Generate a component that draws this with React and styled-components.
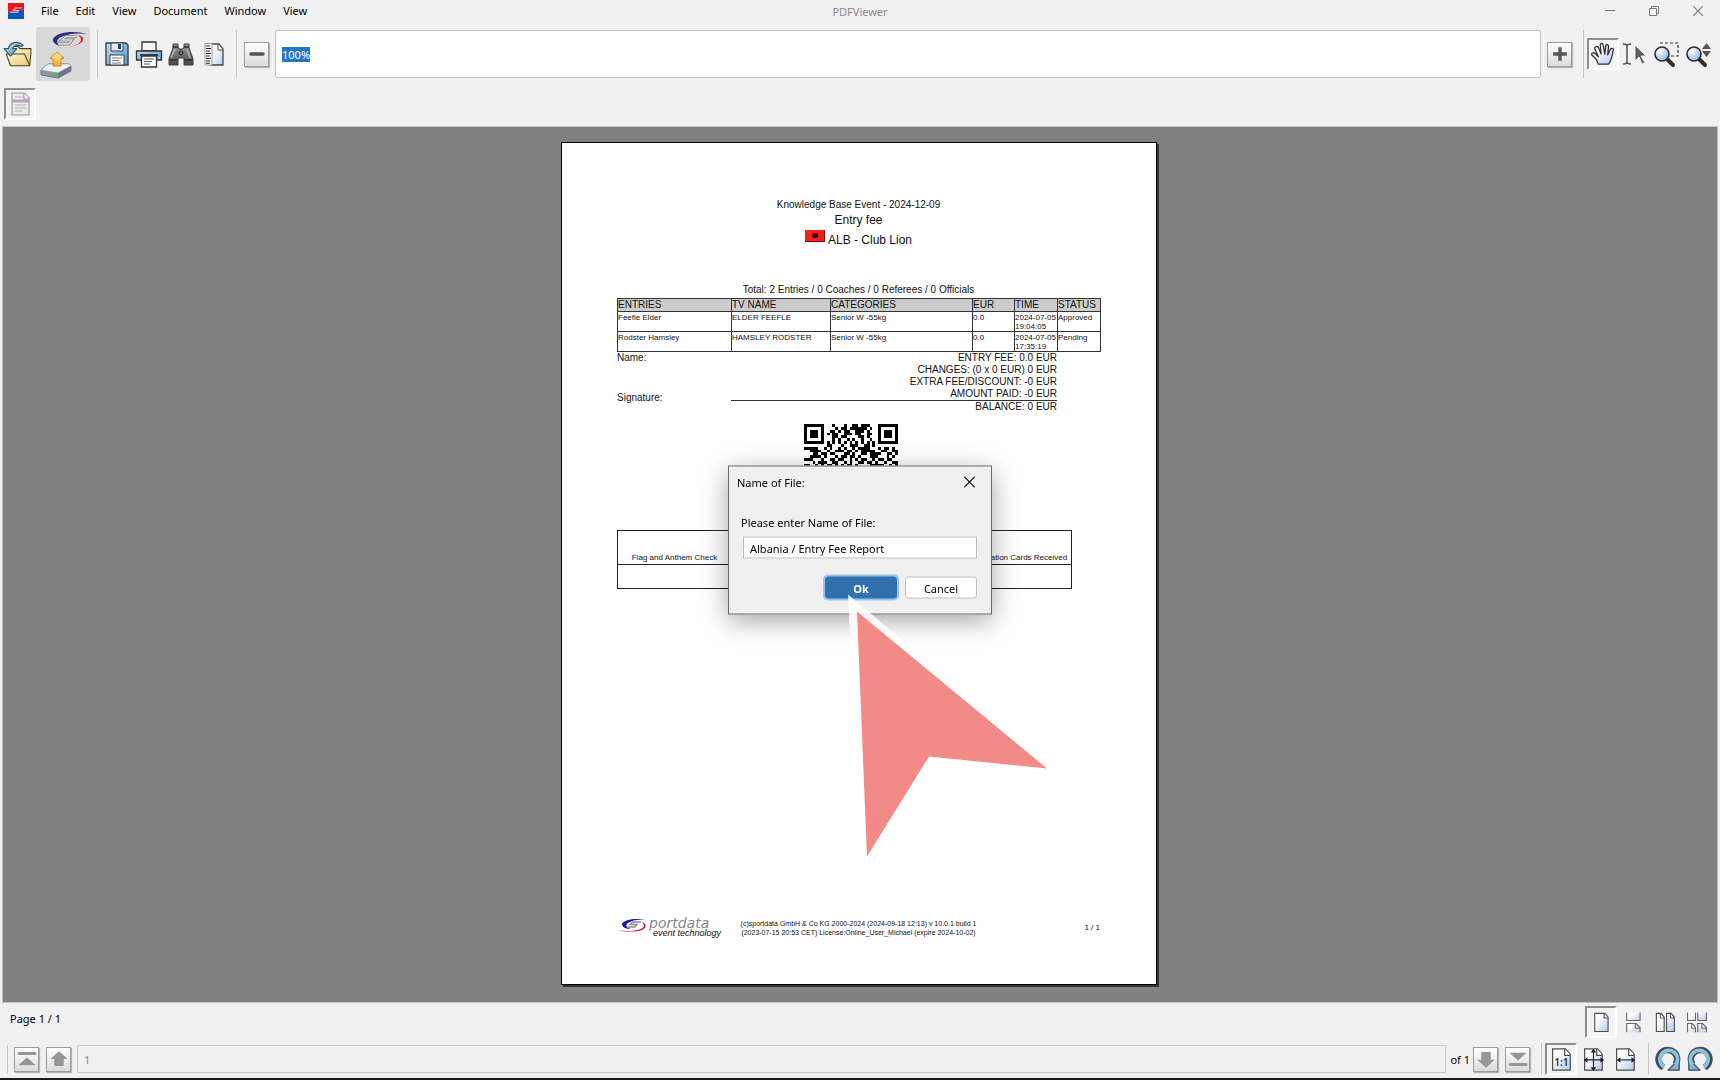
import React, { useEffect, useRef } from "react";
import styled, { createGlobalStyle, css } from "styled-components";

const menus = ["File", "Edit", "View", "Document", "Window", "View"];

const entries = [
  { name: "Feefle Elder", tv: "ELDER FEEFLE", category: "Senior W -55kg", eur: "0.0", time: "2024-07-05 19:04:05", status: "Approved" },
  { name: "Rodster Hamsley", tv: "HAMSLEY RODSTER", category: "Senior W -55kg", eur: "0.0", time: "2024-07-05 17:35:19", status: "Pending" },
];

const columns = [
  { label: "ENTRIES", width: 114 },
  { label: "TV NAME", width: 99 },
  { label: "CATEGORIES", width: 142 },
  { label: "EUR", width: 42 },
  { label: "TIME", width: 43 },
  { label: "STATUS", width: 43 },
];

const fees = [
  "ENTRY FEE: 0.0 EUR",
  "CHANGES: (0 x 0 EUR) 0 EUR",
  "EXTRA FEE/DISCOUNT: -0 EUR",
  "AMOUNT PAID: -0 EUR",
];

const qrRows = [
  "111111100010001001101110001111111",
  "100000100001011011111101001000001",
  "101110100110101100111010001011101",
  "101110101011001110110011001011101",
  "101110100011011000011010001011101",
  "100000100010100101001001001000001",
  "111111101010101010101010101111111",
  "000000001100010011100110100000000",
  "111110010100101001011110001011010",
  "001111001001110110101111100110011",
  "000110110110001101001101111001101",
  "001111010001011011010001110001010",
  "111000100110110010101100101101100",
  "000101110011001010011011010010011",
  "110010101101010110100001111100101",
  "011011010010110101101101001101010",
  "101100101101001110010110110010110",
  "010011110010110010110100101101001",
  "110101001101011101001011010110110",
  "001011010110100110110101101001011",
  "101100101001011011001010110110100",
  "010110110110100101101101001011011",
  "111001001011011010010110110100110",
  "001101011010110101101001011011001",
  "101011001101001011010110111110110",
  "000000001010110100101101100011011",
  "111111101101001011010011101010100",
  "100000100110110101101101100011011",
  "101110101001011010110010111110110",
  "101110100110100101001101011001001",
  "101110101011011010110100101101110",
  "100000100101101001011011010010011",
  "111111101010010110100101101101101",
];

/* ---------- icons ---------- */

const Icon = ({ size = 28, children }) => (
  <svg width={size} height={size} viewBox="0 0 28 28" fill="none" aria-hidden="true">
    {children}
  </svg>
);

const Gradients = () => (
  <HiddenSvg aria-hidden="true">
    <defs>
      <linearGradient id="sheet" x1="0" y1="0" x2="1" y2="1">
        <stop offset="0.3" stopColor="#fff" />
        <stop offset="1" stopColor="#b4c9ef" />
      </linearGradient>
      <linearGradient id="blue" x1="0" y1="0" x2="1" y2="1">
        <stop offset="0" stopColor="#b9dcf0" />
        <stop offset="1" stopColor="#5b93c0" />
      </linearGradient>
      <linearGradient id="folder" x1="0" y1="0" x2="1" y2="1">
        <stop offset="0" stopColor="#fffbd8" />
        <stop offset="1" stopColor="#e3c86e" />
      </linearGradient>
      <linearGradient id="grey" x1="0" y1="0" x2="0" y2="1">
        <stop offset="0" stopColor="#9a9a9a" />
        <stop offset="1" stopColor="#4a4a4a" />
      </linearGradient>
      <linearGradient id="gold" x1="0" y1="0" x2="0" y2="1">
        <stop offset="0" stopColor="#fff0a8" />
        <stop offset="1" stopColor="#f2a52a" />
      </linearGradient>
      <radialGradient id="lens" cx="0.35" cy="0.3" r="0.8">
        <stop offset="0" stopColor="#fff" />
        <stop offset="1" stopColor="#7fb0e4" />
      </radialGradient>
    </defs>
  </HiddenSvg>
);

const AppIcon = () => (
  <svg width="16" height="16" viewBox="0 0 16 16" aria-hidden="true">
    <path d="M0 0h16v10H0z" fill="#f5121a" />
    <path d="M0 9.500 16 7v9H0z" fill="#0a55c4" />
    <path d="M14 5H7.500L5.500 7.500h5L9 9.500H2" fill="none" stroke="#b9a9b8" strokeWidth="1.600" />
    <path d="M14 6.200H9M10 10.600H3" fill="none" stroke="#45405c" strokeWidth="0.800" />
  </svg>
);

const OpenIcon = () => (
  <Icon size={30}>
    <path d="M7 23V9l2-2h5l2 2h10v5l-1 10H7z" fill="url(#folder)" stroke="#4a431f" />
    <path d="M7 25 3 14h17l5 11z" fill="url(#folder)" stroke="#4a431f" strokeLinejoin="round" />
    <path d="M19 6C14 1 6 3 5 9H1l6 7 6-7H9c1-3 5-4 8-2z" fill="url(#blue)" stroke="#345a70" strokeLinejoin="round" />
  </Icon>
);

const UploadLogo = () => (
  <svg width="54" height="54" viewBox="0 0 54 54" aria-hidden="true">
    <path d="M51 7C38 3 20 5 17 12c-1 3 3 6 7 7-5-4-3-8 4-10 7-3 15-3 23-2z" fill="#29327f" />
    <path d="M16 19c14 3 28 0 29-6 0-2-1-4-4-5 8 1 8 6 2 9-7 4-19 4-27 2z" fill="#d8222b" />
    <path d="M41 9.500H30l-4 3.500h10l-3 4H22" fill="none" stroke="#85858c" strokeWidth="3" />
    <path d="M41 9.500H30l-4 3.500h10l-3 4H22" fill="none" stroke="#dcdce0" strokeWidth="1.400" />
    <path d="m5 43 7-6h21l2 2v5l-13 7-17-3z" fill="#8f98a4" stroke="#59616c" strokeWidth="0.800" />
    <path d="m5 43 7-6h21l2 2-13 7z" fill="#eef1f4" stroke="#8b939c" strokeWidth="0.600" />
    <path d="m22 46 13-7v5l-13 7z" fill="#6d7785" />
    <circle cx="20" cy="47" r="1.600" fill="#27d33c" />
    <path d="m21 25 7 6-3 1v7h-8v-7l-3-1z" fill="url(#gold)" stroke="#c9881e" strokeLinejoin="round" />
  </svg>
);

const SaveIcon = () => (
  <Icon>
    <path d="M3 3h20l2 2v20H3z" fill="url(#blue)" stroke="#33444f" strokeWidth="1.400" />
    <path d="M8 3h12v8H8z" fill="#dfe8ee" stroke="#33444f" />
    <path d="M15 4h3v5h-3z" fill="#33444f" />
    <path d="M7 15h14v10H7z" fill="#fff" stroke="#33444f" />
    <path d="M9 18h10M9 20.500h7M9 23h9" stroke="#777" />
  </Icon>
);

const PrintIcon = () => (
  <Icon>
    <path d="M7 2h14v9H7z" fill="#f5f5f5" stroke="#333" strokeWidth="1.300" />
    <path d="M1.500 11h25v9h-25z" fill="url(#blue)" stroke="#333" strokeWidth="1.300" />
    <path d="M5 15h18" stroke="#222" strokeWidth="1.600" />
    <path d="M6.500 16h15v11h-15z" fill="#fff" stroke="#333" strokeWidth="1.300" />
    <path d="M9 19h10M9 21.500h8M9 24h6" stroke="#555" />
    <path d="M23 18h2" stroke="#eee" />
  </Icon>
);

const FindIcon = () => (
  <Icon>
    <path d="M6 4h5v3l1 2h4l1-2V4h5v4l4 11v6h-9v-7h-6v7H2v-6L6 8z" fill="url(#grey)" stroke="#3f3f3f" strokeLinejoin="round" />
    <path d="M6 7h5M17 7h5M2.500 20H11M17 20h8.500" stroke="#2c2c2c" strokeWidth="1.300" />
    <path d="m8 9-4 9M20 9l3 9" stroke="#b6b6b6" strokeWidth="1.400" />
    <circle cx="14" cy="13" r="2" fill="#777" stroke="#222" />
  </Icon>
);

const PropertiesIcon = () => (
  <Icon>
    <path d="M12 4h8l4 5v16H12z" fill="url(#sheet)" stroke="#444" strokeWidth="1.300" />
    <path d="M19 4v6h5" stroke="#444" fill="#fff" />
    <path d="M6 3.500h7v21.500H6z" fill="#fff" stroke="#999" />
    <path d="M7 6h4M7 8.500h5M7 11h4M7 13.500h5M7 16h4M7 18.500h5M7 21h4M7 23.200h4" stroke="#222" strokeWidth="1.100" />
  </Icon>
);

const MinusIcon = () => (
  <Icon size={24}><path d="M7 14h14" stroke="#555" strokeWidth="4" strokeLinecap="round" /></Icon>
);

const PlusIcon = () => (
  <Icon size={24}><path d="M14 6v16M6 14h16" stroke="#585858" strokeWidth="4" /></Icon>
);

const HandIcon = () => (
  <Icon size={26}>
    <path
      d="M9 25 7 20l-5-5c-1-2 1-3 3-2l4 4-4-9c0-2 3-3 4-1l3 7-1-10c0-2 3-2 3 0l2 10 1-9c1-2 3-1 3 1l-1 9 3-6c1-2 4-1 3 1-1 6-2 11-5 15z"
      fill="url(#sheet)" stroke="#333" strokeWidth="1.400" strokeLinejoin="round"
    />
  </Icon>
);

const SelectIcon = () => (
  <Icon>
    <path d="M2 4c3 0 4 .500 4 2v16c0 1.500-1 2-4 2M10 4c-3 0-4 .500-4 2v16c0 1.500 1 2 4 2" stroke="#4b4b4b" strokeWidth="1.400" />
    <path d="m14 5 11 11h-5l4 7-3 1-3-7-4 4z" fill="#5d5d5d" stroke="#fff" strokeWidth="0.800" />
  </Icon>
);

const Lens = () => (
  <>
    <path d="m14 19 6 6" stroke="#2e2e2e" strokeWidth="4" strokeLinecap="round" />
    <circle cx="9" cy="14" r="7" fill="url(#lens)" stroke="#2e2e2e" strokeWidth="1.600" />
  </>
);

const MarqueeIcon = () => (
  <Icon>
    <path d="M7 3h18v13h-9" stroke="#333" strokeWidth="1.200" strokeDasharray="3 2" />
    <Lens />
  </Icon>
);

const DynamicIcon = () => (
  <Icon>
    <path d="M21.500 3 26 9h-9zM21.500 17 26 11h-9z" fill="#555" />
    <Lens />
  </Icon>
);

const BookmarksIcon = () => (
  <Icon>
    <path d="M6 3h13l4 5v17H6z" fill="#ececec" stroke="#9b9b9b" strokeWidth="1.200" />
    <path d="M18 3v6h5" fill="#fff" stroke="#8e8e8e" />
    <path d="M9 7h8M9 15h11M9 18h11M9 21h8" stroke="#b3b3b3" />
    <path d="M6 9.500h17v3H6z" fill="#b9a4bf" />
  </Icon>
);

const PageIcon = () => (
  <Icon size={22}>
    <path d="M6 3h13l4 5v18H6z" fill="url(#sheet)" stroke="#4c4c4c" strokeWidth="1.400" />
    <path d="M18 3v6h5" stroke="#4c4c4c" strokeWidth="1.400" fill="#fff" />
  </Icon>
);

const ContinuousIcon = () => (
  <Icon size={22}>
    <path d="M6 2v10h17V2" fill="url(#sheet)" stroke="#666" strokeWidth="1.400" />
    <path d="M6 27V16h12l5 5v6" fill="url(#sheet)" stroke="#666" strokeWidth="1.400" />
    <path d="M17 16v6h6" stroke="#666" strokeWidth="1.400" />
  </Icon>
);

const FacingIcon = () => (
  <Icon size={22}>
    <path d="M3 3h6l4 5v18H3zM16 3h6l4 5v18H16z" fill="url(#sheet)" stroke="#4c4c4c" strokeWidth="1.400" />
    <path d="M8 3v6h5M21 3v6h5" stroke="#4c4c4c" strokeWidth="1.200" />
  </Icon>
);

const FacingContinuousIcon = () => (
  <Icon size={22}>
    <path d="M2 2v10h10V2M15 2v10h11V2" fill="url(#sheet)" stroke="#666" strokeWidth="1.400" />
    <path d="M2 27V16h6l4 5v6M15 27V16h6l5 5v6" fill="url(#sheet)" stroke="#666" strokeWidth="1.400" />
    <path d="M7 16v6h5M20 16v6h6" stroke="#666" strokeWidth="1.200" />
  </Icon>
);

const Sheet = () => (
  <>
    <path d="M5 3h14l5 6v17H5z" fill="url(#sheet)" stroke="#4c4c4c" strokeWidth="1.300" />
    <path d="M18 3v7h6" stroke="#4c4c4c" strokeWidth="1.300" fill="#fff" />
  </>
);

const ActualSizeIcon = () => (
  <Icon size={26}>
    <Sheet />
    <text x="14.500" y="21" textAnchor="middle" fontFamily="Noto Sans, sans-serif" fontWeight="600" fontSize="11" fill="#333">1:1</text>
  </Icon>
);

const FitPageIcon = () => (
  <Icon size={26}>
    <Sheet />
    <path d="M14.500 4v22M5 15h20" stroke="#222" strokeWidth="1.200" />
    <path d="m14.500 3 3 4h-6zM14.500 27l3-4h-6zM4 15l4-3v6zM26 15l-4-3v6z" fill="#222" />
  </Icon>
);

const FitWidthIcon = () => (
  <Icon size={26}>
    <Sheet />
    <path d="M7 15h16" stroke="#222" strokeWidth="1.200" />
    <path d="m5 15 4-3v6zM25 15l-4-3v6z" fill="#222" />
  </Icon>
);

const RotateIcon = ({ flip }) => (
  <Icon size={26}>
    <g transform={flip ? "translate(28 0) scale(-1 1)" : undefined}>
      <path d="M9 23A10 10 0 1 1 22 20" stroke="#3d4f59" strokeWidth="7" />
      <path d="M14 26h12V14z" fill="#7fb2d6" stroke="#3d4f59" strokeWidth="1.400" strokeLinejoin="round" />
      <path d="M10 22.500A9.500 9.500 0 1 1 22 20.500" stroke="#8fc0e0" strokeWidth="4" />
    </g>
  </Icon>
);

const FirstIcon = () => (
  <Icon size={22}><path d="M4 7h20" stroke="#969696" strokeWidth="4" strokeLinecap="round" /><path d="m14 12 11 10H3z" fill="#969696" /></Icon>
);
const PrevIcon = () => (
  <Icon size={22}><path d="m14 4 11 10h-5v9H8v-9H3z" fill="#969696" /></Icon>
);
const NextIcon = () => (
  <Icon size={22}><path d="M14 25 3 15h5V5h12v10h5z" fill="#969696" /></Icon>
);
const LastIcon = () => (
  <Icon size={22}><path d="M4 21h20" stroke="#969696" strokeWidth="4" strokeLinecap="round" /><path d="M14 16 3 6h22z" fill="#969696" /></Icon>
);

const CloseIcon = ({ size, color }) => (
  <svg width={size} height={size} viewBox="0 0 10 10" aria-hidden="true">
    <path d="M0 0l10 10M10 0 0 10" stroke={color} strokeWidth="1.100" />
  </svg>
);

const QrCode = () => (
  <Qr viewBox="0 0 33 33" shapeRendering="crispEdges" role="img" aria-label="QR code">
    {qrRows.map((row, y) =>
      row.split("").map((cell, x) => cell === "1" && <path key={`${x}-${y}`} d={`M${x} ${y}h1v1h-1z`} />)
    )}
  </Qr>
);

/* ---------- page ---------- */

export default function App() {
  const zoomRef = useRef();

  useEffect(() => {
    zoomRef.current?.focus();
    zoomRef.current?.select();
  }, []);

  return (
    <Window>
      <GlobalStyle />
      <Gradients />
      <TitleBar>
        <MenuBar>
          <AppIcon />
          {menus.map((menu, i) => (
            <MenuButton key={i}>{menu}</MenuButton>
          ))}
        </MenuBar>
        <Title>PDFViewer</Title>
        <WindowControls>
          <ControlButton aria-label="Minimize">
            <svg width="10" height="10" viewBox="0 0 10 10"><path d="M0 4.500h10" stroke="#777" /></svg>
          </ControlButton>
          <ControlButton aria-label="Restore">
            <svg width="10" height="10" viewBox="0 0 10 10" fill="none" stroke="#777"><path d="M.500 2.500h7v7h-7zM2.500 2V.500h7v7H8" /></svg>
          </ControlButton>
          <ControlButton aria-label="Close"><CloseIcon size={10} color="#777" /></ControlButton>
        </WindowControls>
      </TitleBar>

      <Toolbar>
        <ToolButton aria-label="Open"><OpenIcon /></ToolButton>
        <UploadButton aria-label="Upload"><UploadLogo /></UploadButton>
        <Separator />
        <ToolButton aria-label="Save"><SaveIcon /></ToolButton>
        <ToolButton aria-label="Print"><PrintIcon /></ToolButton>
        <ToolButton aria-label="Find"><FindIcon /></ToolButton>
        <ToolButton aria-label="Properties"><PropertiesIcon /></ToolButton>
        <Separator />
        <SquareButton aria-label="Zoom out"><MinusIcon /></SquareButton>
        <ZoomInput ref={zoomRef} aria-label="Zoom" defaultValue="100%" />
        <SquareButton aria-label="Zoom in"><PlusIcon /></SquareButton>
        <Separator />
        <ToolButton $active aria-label="Pan"><HandIcon /></ToolButton>
        <ToolButton aria-label="Select text"><SelectIcon /></ToolButton>
        <ToolButton aria-label="Zoom marquee"><MarqueeIcon /></ToolButton>
        <ToolButton aria-label="Zoom dynamic"><DynamicIcon /></ToolButton>
      </Toolbar>

      <PanelBar>
        <ToolButton $active aria-label="Bookmarks"><BookmarksIcon /></ToolButton>
      </PanelBar>

      <Viewport>
        <Page>
          <EventName>Knowledge Base Event - 2024-12-09</EventName>
          <Heading>Entry fee</Heading>
          <Club>
            <svg width="20" height="12" viewBox="0 0 20 12" aria-hidden="true">
              <path d="M0 0h20v12H0z" fill="#f5201c" />
              <path d="M19 0h1v12H0v-1h19z" fill="#7c0d0d" />
              <path d="M8 3l1 .500 1-1 1 1L13 3v4l-2 1H9L7 7z" fill="#3a0505" />
            </svg>
            ALB - Club Lion
          </Club>
          <Totals>Total: 2 Entries / 0 Coaches / 0 Referees / 0 Officials</Totals>

          <EntriesTable>
            <colgroup>
              {columns.map((col) => <Col key={col.label} $width={col.width} />)}
            </colgroup>
            <thead>
              <tr>{columns.map((col) => <th key={col.label}>{col.label}</th>)}</tr>
            </thead>
            <tbody>
              {entries.map((entry) => (
                <tr key={entry.name}>
                  <td>{entry.name}</td>
                  <td>{entry.tv}</td>
                  <td>{entry.category}</td>
                  <td>{entry.eur}</td>
                  <td>{entry.time}</td>
                  <td>{entry.status}</td>
                </tr>
              ))}
            </tbody>
          </EntriesTable>

          <Summary>
            <SignLabels>
              <span>Name:</span>
              <span>Signature:</span>
            </SignLabels>
            <Fees>
              {fees.map((fee) => <div key={fee}>{fee}</div>)}
              <Balance>BALANCE: 0 EUR</Balance>
            </Fees>
          </Summary>

          <QrCode />

          <CheckTable>
            <tbody>
              <tr>
                <td>Flag and Anthem Check</td>
                <td />
                <td />
                <td>Accreditation Cards Received</td>
              </tr>
              <tr><td /><td /><td /><td /></tr>
            </tbody>
          </CheckTable>

          <PageFooter>
            <Brand>
              <BrandMark viewBox="0 0 32 14" aria-hidden="true">
                <path d="M29 2C20 0 7 1 5 6c0 3 4 5 9 5-5-1-6-4-3-6 4-3 11-4 18-3z" fill="#1717a8" />
                <path d="M0 12c10 2 26 1 27-4 0-2-1-3-3-4 6 1 6 6 1 8-6 2-18 2-25 0z" fill="#d01414" />
                <path d="M24 4h-8l-3 2.500h7L18 9h-8" fill="none" stroke="#8a8a8a" strokeWidth="1.300" />
              </BrandMark>
              <BrandText>
                <BrandName>portdata</BrandName>
                <BrandTag>event technology</BrandTag>
              </BrandText>
            </Brand>
            <Copyright>
              (c)sportdata GmbH &amp; Co KG 2000-2024 (2024-09-18 12:13) v 10.0.1 build 1<br />
              (2023-07-15 20:53 CET) License:Online_User_Michael (expire 2024-10-02)
            </Copyright>
            <PageCount>1 / 1</PageCount>
          </PageFooter>
        </Page>
      </Viewport>

      <StatusBar>
        <span>Page 1 / 1</span>
        <StatusTools>
          <ToolButton $active aria-label="Single page"><PageIcon /></ToolButton>
          <ToolButton aria-label="Continuous"><ContinuousIcon /></ToolButton>
          <ToolButton aria-label="Facing"><FacingIcon /></ToolButton>
          <ToolButton aria-label="Continuous facing"><FacingContinuousIcon /></ToolButton>
        </StatusTools>
      </StatusBar>

      <NavBar>
        <NavSeparator />
        <SquareButton disabled aria-label="First page"><FirstIcon /></SquareButton>
        <SquareButton disabled aria-label="Previous page"><PrevIcon /></SquareButton>
        <PageInput id="page" disabled defaultValue="1" />
        <label htmlFor="page">of 1</label>
        <SquareButton disabled aria-label="Next page"><NextIcon /></SquareButton>
        <SquareButton disabled aria-label="Last page"><LastIcon /></SquareButton>
        <NavTools>
          <ToolButton $active aria-label="Actual size"><ActualSizeIcon /></ToolButton>
          <ToolButton aria-label="Fit page"><FitPageIcon /></ToolButton>
          <ToolButton aria-label="Fit width"><FitWidthIcon /></ToolButton>
        </NavTools>
        <NavTools>
          <ToolButton aria-label="Rotate clockwise"><RotateIcon /></ToolButton>
          <ToolButton aria-label="Rotate counterclockwise"><RotateIcon flip /></ToolButton>
        </NavTools>
      </NavBar>

      <Dialog role="dialog" aria-labelledby="dialog-title">
        <DialogHeader>
          <span id="dialog-title">Name of File:</span>
          <ControlButton aria-label="Close dialog"><CloseIcon size={11} color="#111" /></ControlButton>
        </DialogHeader>
        <DialogBody>
          <label htmlFor="filename">Please enter Name of File:</label>
          <FileInput id="filename" defaultValue="Albania / Entry Fee Report" />
          <Actions>
            <DialogButton $primary>Ok</DialogButton>
            <DialogButton>Cancel</DialogButton>
          </Actions>
        </DialogBody>
        <Pointer viewBox="0 0 240 280" aria-hidden="true">
          <path d="M0 0 222 186 85 176 14 276z" fill="#fff" fillOpacity="0.850" />
          <path d="M9 17 199 174 81 162 19 262z" fill="#f28a88" />
        </Pointer>
      </Dialog>
    </Window>
  );
}

/* ---------- styles ---------- */

const GlobalStyle = createGlobalStyle`
  * {
    box-sizing: border-box;
  }
  body {
    margin: 0;
    background: #f1f1f1;
  }
  button, input {
    font: inherit;
    color: inherit;
  }
  button {
    padding: 0;
    border: none;
    background: none;
  }
  svg {
    display: block;
    flex: none;
  }
`;

const Window = styled.div`
  display: flex;
  flex-direction: column;
  min-height: 100vh;
  border-bottom: 2px solid #1b191c;
  background: #f1f1f1;
  color: #000;
  font-family: "Noto Sans", "Open Sans", sans-serif;
  font-size: 11px;
`;

const HiddenSvg = styled.svg`
  position: absolute;
  width: 0;
  height: 0;
`;

const TitleBar = styled.div`
  display: grid;
  grid-template-columns: 1fr auto 1fr;
  height: 27px;
  padding-bottom: 5px;
  align-items: center;
`;

const MenuBar = styled.div`
  display: flex;
  align-items: center;
  gap: 17px;
  padding-left: 8px;
`;

const MenuButton = styled.button`
  line-height: 16px;
`;

const Title = styled.div`
  color: #8a8a8a;
`;

const WindowControls = styled.div`
  display: flex;
  justify-content: flex-end;
`;

const ControlButton = styled.button`
  display: flex;
  align-items: center;
  justify-content: center;
  width: 44px;
  height: 22px;
`;

const Toolbar = styled.div`
  display: flex;
  align-items: center;
  height: 54px;
  padding: 0 5px 0 2px;
`;

const ToolButton = styled.button`
  display: flex;
  flex: none;
  align-items: center;
  justify-content: center;
  width: 32px;
  height: 32px;
  ${({ $active }) =>
    $active &&
    css`
      border: 2px solid #fff;
      border-top-color: #8e8e8e;
      border-left-color: #8e8e8e;
      background: #f4f4f4;
    `}
`;

const UploadButton = styled.button`
  margin-left: 2px;
  border-radius: 3px;
  background: #d9d9d9;
`;

const Separator = styled.div`
  flex: none;
  width: 1px;
  height: 48px;
  margin: 0 3px 0 7px;
  background: #c6c6c6;
`;

const SquareButton = styled.button`
  display: flex;
  flex: none;
  align-items: center;
  justify-content: center;
  width: 25px;
  height: 25px;
  margin: 0 4px;
  border: 1px solid #9c9c9c;
  background: linear-gradient(#fff, #dcdcdc);
  box-shadow: 1px 1px 1px #b5b5b5;
`;

const ZoomInput = styled.input`
  flex: 1;
  min-width: 0;
  height: 48px;
  margin: 0 2px;
  padding: 0 6px;
  border: 1px solid #c2c2c2;
  border-radius: 2px;
  background: #fff;
  outline: none;
  &::selection {
    background: #2675bf;
    color: #fff;
  }
`;

const PanelBar = styled.div`
  padding: 7px 4px 6px;
`;

const Viewport = styled.main`
  flex: 1;
  margin: 0 2px;
  padding: 15px 2px 16px 0;
  border: 1px solid #c4c4c4;
  background: #808080;
`;

const Page = styled.article`
  display: flex;
  flex-direction: column;
  width: 596px;
  min-height: 843px;
  margin: 0 auto;
  padding: 55px 56px 46px 55px;
  border: 1px solid #000;
  background: #fff;
  box-shadow: 2px 2px 0 #333;
  color: #111;
  font-family: "Liberation Sans", Arial, sans-serif;
  font-size: 10px;
  line-height: 12px;
`;

const EventName = styled.div`
  line-height: 14px;
  text-align: center;
`;

const Heading = styled.div`
  font-size: 12px;
  line-height: 17px;
  text-align: center;
`;

const Club = styled.div`
  display: flex;
  justify-content: center;
  gap: 3px;
  font-size: 12px;
  line-height: 22px;
  svg {
    margin-top: 1px;
  }
`;

const Totals = styled.div`
  margin: 32px 0 1px;
  line-height: 14px;
  text-align: center;
`;

const Col = styled.col`
  width: ${({ $width }) => $width}px;
`;

const EntriesTable = styled.table`
  width: 100%;
  table-layout: fixed;
  border-collapse: collapse;
  th, td {
    padding: 0;
    border: 1px solid #333;
    text-align: left;
    vertical-align: top;
  }
  th {
    background: #ccc;
    font-weight: 400;
    line-height: 12px;
  }
  td {
    padding-top: 1px;
    font-size: 8px;
    line-height: 9px;
  }
`;

const Summary = styled.div`
  display: grid;
  grid-template-columns: 114px 326px;
`;

const SignLabels = styled.div`
  display: flex;
  flex-direction: column;
  justify-content: space-between;
  padding-bottom: 9px;
`;

const Fees = styled.div`
  text-align: right;
`;

const Balance = styled.div`
  border-top: 1px solid #333;
`;

const Qr = styled.svg`
  width: 94px;
  height: 94px;
  margin: 11px 0 12px 187px;
`;

const CheckTable = styled.table`
  width: 455px;
  table-layout: fixed;
  border: 1px solid #222;
  border-collapse: collapse;
  font-size: 8px;
  line-height: 10px;
  text-align: center;
  white-space: nowrap;
  td {
    height: 24px;
    padding: 0;
    border-bottom: 1px solid #222;
  }
  tr:first-child td {
    height: 34px;
    padding-bottom: 1px;
    vertical-align: bottom;
  }
`;

const PageFooter = styled.footer`
  display: grid;
  grid-template-columns: 1fr auto 1fr;
  align-items: center;
  margin-top: auto;
`;

const Brand = styled.div`
  display: flex;
  font-style: italic;
`;

const BrandMark = styled.svg`
  width: 32px;
  height: 14px;
`;

const BrandText = styled.div`
  display: flex;
  flex-direction: column;
`;

const BrandName = styled.span`
  color: #888;
  font-family: "DejaVu Sans", sans-serif;
  font-size: 14px;
  line-height: 10px;
`;

const BrandTag = styled.span`
  padding-left: 4px;
  font-size: 9px;
  line-height: 10px;
  white-space: nowrap;
`;

const Copyright = styled.div`
  font-size: 7px;
  line-height: 9px;
  text-align: center;
`;

const PageCount = styled.div`
  font-size: 8px;
  text-align: right;
`;

const StatusBar = styled.div`
  display: flex;
  justify-content: space-between;
  align-items: flex-start;
  padding: 3px 7px 5px 10px;
  > span {
    padding-top: 5px;
    line-height: 16px;
  }
`;

const StatusTools = styled.div`
  display: flex;
`;

const NavBar = styled.div`
  display: flex;
  align-items: center;
  padding: 0 4px 3px 7px;
  ${SquareButton} {
    margin: 0 4px 0 3px;
  }
`;

const NavSeparator = styled.div`
  width: 1px;
  height: 28px;
  margin-right: 3px;
  background: #c6c6c6;
`;

const PageInput = styled.input`
  flex: 1;
  min-width: 0;
  height: 28px;
  margin: 0 4px 0 2px;
  padding: 0 6px;
  border: 1px solid #c9c9c9;
  background: #f1f1f1;
  color: #8c8c8c;
`;

const NavTools = styled.div`
  display: flex;
  margin-left: 7px;
  padding-left: 3px;
  border-left: 1px solid #c6c6c6;
`;

const Dialog = styled.div`
  position: fixed;
  top: 50%;
  left: 50%;
  width: 264px;
  transform: translate(-50%, -50%);
  border: 1px solid #6a6a6a;
  background: #f0f0f0;
  box-shadow: 0 6px 24px rgba(0, 0, 0, 0.35);
`;

const DialogHeader = styled.div`
  display: flex;
  justify-content: space-between;
  align-items: center;
  height: 31px;
  padding-left: 8px;
`;

const DialogBody = styled.div`
  display: flex;
  flex-direction: column;
  padding: 17px 14px 15px 12px;
  label {
    line-height: 16px;
  }
`;

const FileInput = styled.input`
  height: 22px;
  margin: 6px 0 18px 2px;
  padding: 0 6px;
  border: 1px solid #bdbdbd;
  background: #fff;
  outline: none;
`;

const Actions = styled.div`
  display: flex;
  justify-content: flex-end;
  gap: 8px;
`;

const DialogButton = styled.button`
  width: 72px;
  height: 22px;
  border: 1px solid #c0c0c0;
  border-radius: 3px;
  background: #fff;
  ${({ $primary }) =>
    $primary &&
    css`
      border-color: #3472b0;
      background: #3270ad;
      box-shadow: 0 0 0 2px #97c3f0;
      color: #fff;
      font-weight: 700;
    `}
`;

const Pointer = styled.svg`
  position: absolute;
  top: 128px;
  left: 119px;
  width: 240px;
  height: 280px;
  pointer-events: none;
`;
